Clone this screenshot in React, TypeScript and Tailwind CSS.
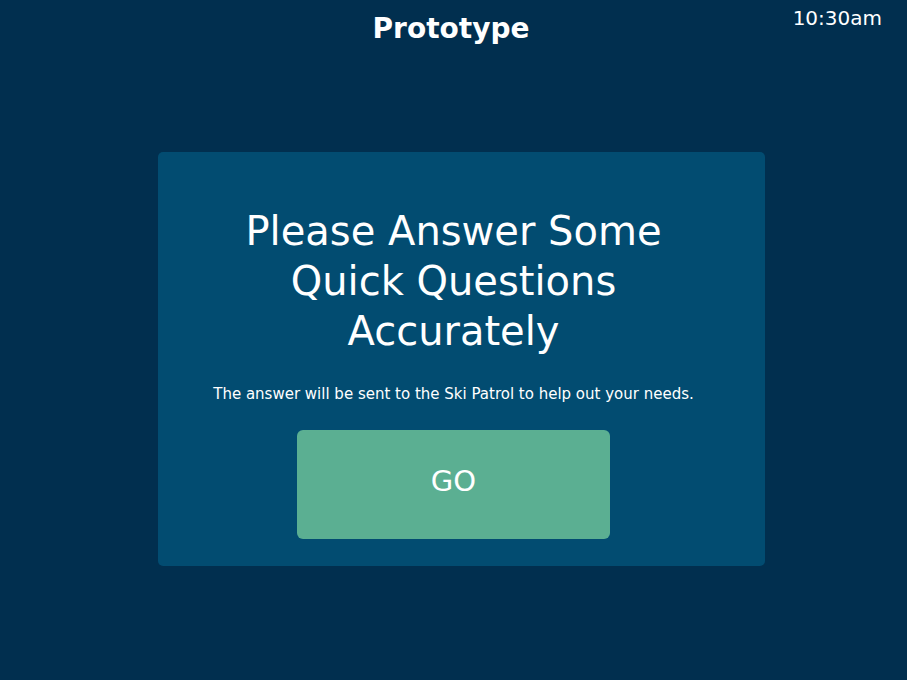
export default function App() {
    return (
        <div className="h-[680px] w-full bg-[#012f4f] text-white flex flex-col" style={{ fontFamily: '"DejaVu Sans", "Open Sans", sans-serif' }}>
            {/* Top bar */}
            <header className="grid grid-cols-[1fr_auto_1fr] items-start h-[56px] px-[25px]">
                <div />
                <h1 className="text-[28px] font-bold leading-none pt-[15px] pr-[5px]">Prototype</h1>
                <div className="text-[20px] leading-none pt-[8px] text-right">10:30am</div>
            </header>

            {/* Card */}
            <main className="ml-[158px] mt-[96px] w-[607px] h-[414px] rounded-[5px] bg-[#024c71] flex flex-col items-center pt-[54px] pr-[16px]">
                <h2 className="text-[40px] leading-[50px] text-center max-w-[470px]">
                    Please Answer Some Quick Questions Accurately
                </h2>
                <p className="text-[15px] mt-[27px]">
                    The answer will be sent to the Ski Patrol to help out your needs.
                </p>
                <button className="mt-[24px] w-[313px] h-[109px] rounded-[6px] bg-[#5baf92] text-[29px] text-white pb-[5px]">
                    GO
                </button>
            </main>
        </div>
    );
}
